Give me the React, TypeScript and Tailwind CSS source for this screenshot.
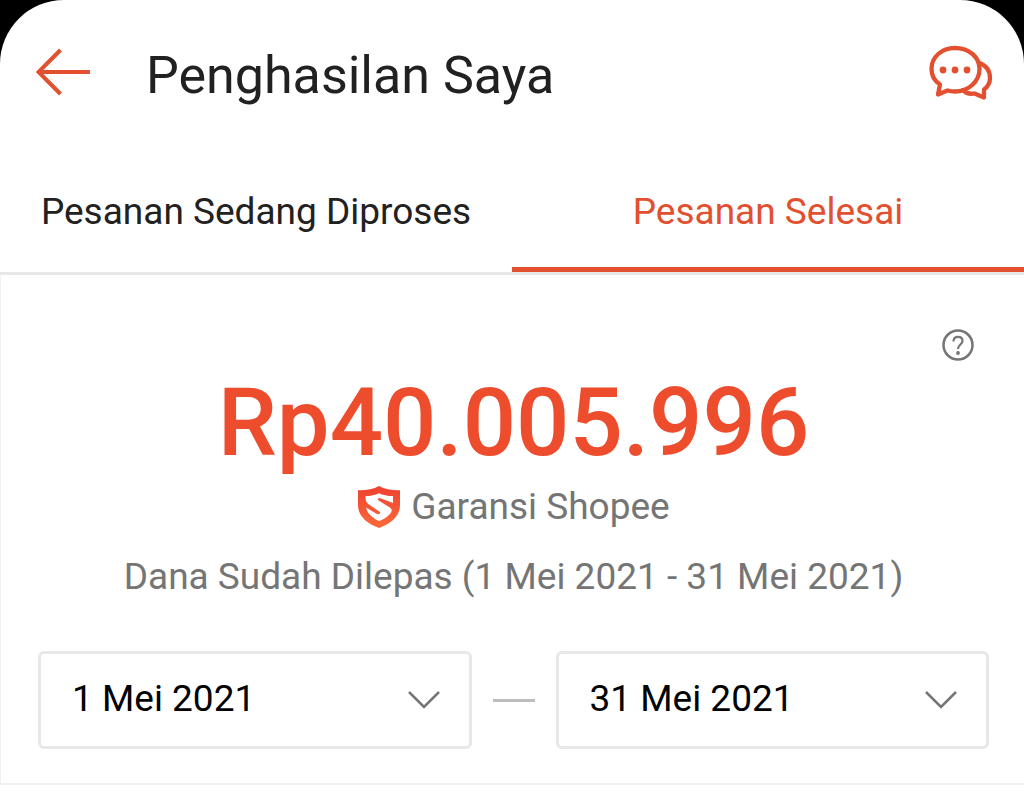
import React from 'react';

const tabs = [
  { id: 'processing', label: 'Pesanan Sedang Diproses' },
  { id: 'done', label: 'Pesanan Selesai' },
];

const BackIcon: React.FC = () => (
  <svg width="56" height="48" viewBox="0 0 56 48" fill="none" aria-hidden="true">
    <path d="M24.500 2 2.500 24l22 22M2.500 24H54" stroke="#e2502f" strokeWidth="4" />
  </svg>
);

const ChatIcon: React.FC = () => (
  <svg width="64" height="56" viewBox="0 0 64 56" fill="none" aria-hidden="true">
    <g stroke="#e2502f" strokeWidth="4.300" strokeLinejoin="round" strokeLinecap="round">
      <path d="M26 4C12.500 4 2.500 13 2.500 25c0 7 3.200 12 8.500 15.500l-2 10 9.500-4c2.300.7 4.800 1 7.500 1 14 0 24.500-10.500 24.500-22.500S40 4 26 4Z" />
      <path d="M50.500 19c6.500 2.500 10.500 8 10.500 15 0 5-2.300 8.800-6 11.500V53.500l-9.500-4c-4.500.8-8.500 0-11.500-3.500" />
    </g>
    <g fill="#e2502f">
      <circle cx="14" cy="26" r="3.400" />
      <circle cx="26" cy="26" r="3.400" />
      <circle cx="38" cy="26" r="3.400" />
    </g>
  </svg>
);

const HelpIcon: React.FC = () => (
  <svg width="32" height="32" viewBox="0 0 32 32" fill="none" aria-hidden="true">
    <circle cx="16" cy="16" r="14.500" stroke="#757575" strokeWidth="2.500" />
    <path
      d="M11.500 12.500c0-2.800 1.800-4.700 4.500-4.700s4.500 1.700 4.500 4.200c0 3.500-4.500 3.700-4.500 8"
      stroke="#757575"
      strokeWidth="2.200"
    />
    <circle cx="16" cy="24" r="1.900" fill="#757575" />
  </svg>
);

const ShieldIcon: React.FC = () => (
  <svg width="44" height="42" viewBox="0 0 44 42" fill="none" aria-hidden="true">
    <defs>
      <linearGradient id="shield" x1="0" y1="0" x2="0" y2="1">
        <stop offset="0" stopColor="#ee4130" />
        <stop offset="1" stopColor="#fb6a3a" />
      </linearGradient>
    </defs>
    <path
      d="M22 0c5.500 3.200 13 4.500 21 4.300V19c0 11-8.500 18.500-21 23C9.500 37.500 1 30 1 19V4.300C9 4.500 16.500 3.200 22 0Z"
      fill="url(#shield)"
    />
    <path
      d="M8.500 10c5.500 0 9.700-.9 13.500-2.800 3.800 1.900 8 2.800 14 2.800v7l-12-4.500c-2.600-.9-4.300.6-2.300 1.900l11.100 7.100c2.500 1.700 2.500 4 .6 6-2.800 3-6.400 5.500-11.200 7.500-6.500-2.700-11.700-7-13.200-13.500l10.500 6.300c2.600 1.400 5-.8 2.800-2.300L11.500 18.200C8.800 16.200 8.300 13.500 8.500 10Z"
      fill="#fff"
    />
  </svg>
);

const ChevronIcon: React.FC = () => (
  <svg
    className="pointer-events-none col-start-1 row-start-1 mr-8 self-center justify-self-end"
    width="32"
    height="18"
    viewBox="0 0 32 18"
    fill="none"
    aria-hidden="true"
  >
    <path d="M1 1l15 15L31 1" stroke="#757575" strokeWidth="2.500" />
  </svg>
);

const DateSelect: React.FC<{ label: string; value: string }> = ({
  label,
  value,
}) => (
  <div className="grid flex-1">
    <select
      aria-label={label}
      defaultValue={value}
      className="col-start-1 row-start-1 h-[98px] w-full appearance-none rounded-md border-[3px] border-[#e8e8e8] bg-white pb-0.5 pl-[31px] text-[37px] text-black"
    >
      <option>{value}</option>
    </select>
    <ChevronIcon />
  </div>
);

const App: React.FC = () => {
  const [activeTab, setActiveTab] = React.useState<string>('done');

  return (
    <div className="bg-black font-[Roboto,sans-serif]">
      <div className="min-h-screen rounded-t-[64px] bg-white">
        <header className="flex h-[148px] items-center pr-[31px] pb-1 pl-9">
          <button type="button" aria-label="Kembali">
            <BackIcon />
          </button>
          <h1 className="ml-[54px] flex-1 pt-2 text-[52px] leading-none text-[#212121]">
            Penghasilan Saya
          </h1>
          <button type="button" aria-label="Chat">
            <ChatIcon />
          </button>
        </header>

        <div role="tablist" className="flex border-b-[3px] border-[#e8e8e8]">
          {tabs.map((tab) => (
            <button
              key={tab.id}
              type="button"
              role="tab"
              aria-selected={activeTab === tab.id}
              onClick={() => setActiveTab(tab.id)}
              className={`h-[124px] flex-1 border-b-[5px] pt-2 text-[37px] ${
                activeTab === tab.id
                  ? 'border-[#e2502f] text-[#e2502f]'
                  : 'border-transparent text-[#212121]'
              }`}
            >
              {tab.label}
            </button>
          ))}
        </div>

        <main className="border-b-2 border-l border-[#f0f0f0] pt-[54px] pr-[35px] pb-[34px] pl-[37px]">
          <div className="flex justify-end pr-[15px]">
            <button type="button" aria-label="Bantuan">
              <HelpIcon />
            </button>
          </div>

          <div className="flex flex-col items-center pt-3.5">
            <p className="text-[94px] leading-24 font-medium text-[#ee4d2d]">
              Rp40.005.996
            </p>
            <div className="mt-3 flex items-center gap-2.5 text-[37px] leading-12 text-[#757575]">
              <ShieldIcon />
              <span>Garansi Shopee</span>
            </div>
            <p className="mt-[22px] text-[37px] leading-12 text-[#757575]">
              Dana Sudah Dilepas (1 Mei 2021 - 31 Mei 2021)
            </p>
          </div>

          <div className="mt-[50px] flex items-center gap-[21px]">
            <DateSelect label="Tanggal mulai" value="1 Mei 2021" />
            <div className="h-[3px] w-[42px] bg-[#bdbdbd]" />
            <DateSelect label="Tanggal akhir" value="31 Mei 2021" />
          </div>
        </main>
      </div>
    </div>
  );
};

export default App;
